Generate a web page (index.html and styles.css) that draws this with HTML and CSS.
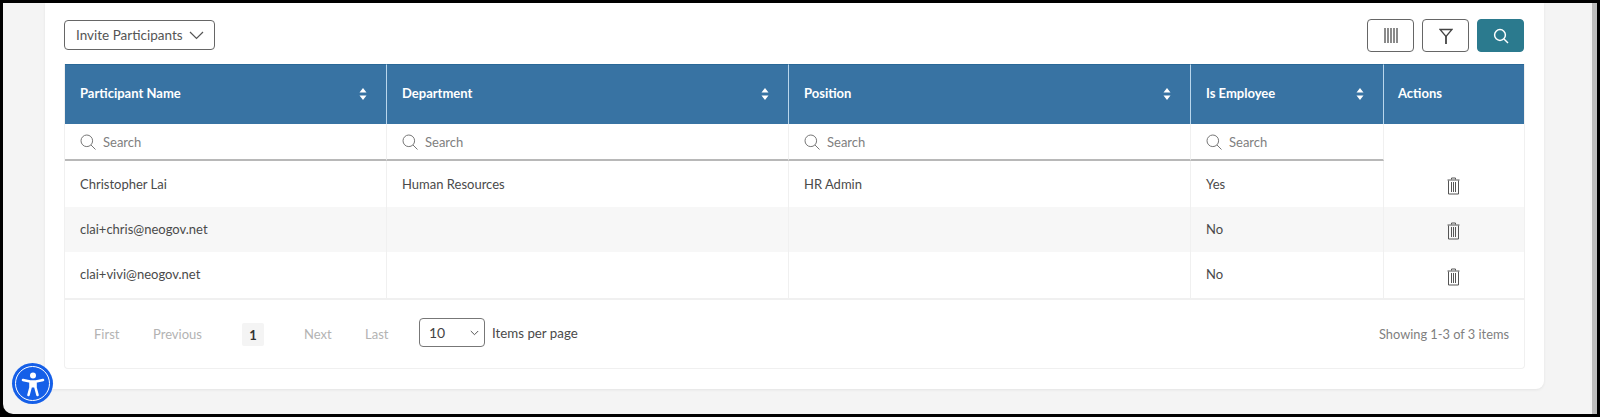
FILE: index.html
```html
<!DOCTYPE html>
<html lang="en">
<head>
<meta charset="utf-8">
<title>Participants</title>
<link rel="stylesheet" href="styles.css">
</head>
<body>
<div class="frame">
  <main class="page">
    <section class="card">
      <div class="toolbar">
        <button class="invite" type="button">Invite Participants
          <svg class="chev" width="15" height="9" viewBox="0 0 15 9"><path d="M1 1l6.500 6.500L14 1" fill="none" stroke="#555" stroke-width="1.200"/></svg>
        </button>
        <div class="tools">
          <button class="tool" type="button" aria-label="Columns">
            <svg width="14" height="15" viewBox="0 0 14 15"><path d="M1 0v15M4 0v15M7 0v15M10 0v15M13 0v15" stroke="#666" stroke-width="1.500"/></svg>
          </button>
          <button class="tool" type="button" aria-label="Filter">
            <svg width="14" height="16" viewBox="0 0 14 16"><path d="M1 1.500h12L7 8.500z" fill="none" stroke="#444" stroke-width="1.300"/><path d="M7 8v8" stroke="#444" stroke-width="1.800"/></svg>
          </button>
          <button class="tool tool-on" type="button" aria-label="Search">
            <svg width="16" height="16" viewBox="0 0 16 16"><circle cx="7" cy="7" r="5.400" fill="none" stroke="#fff" stroke-width="1.500"/><path d="M11 11l4 4" stroke="#fff" stroke-width="1.500"/></svg>
          </button>
        </div>
      </div>
      <div class="grid-wrap">
        <table class="grid">
          <colgroup>
            <col class="c1"><col class="c2"><col class="c3"><col class="c4"><col class="c5">
          </colgroup>
          <thead>
            <tr class="head">
              <th><div class="th-in">Participant Name<svg width="8" height="12" viewBox="0 0 8 12"><path d="M4 0l3.500 4.500h-7zM4 12L.5 7.500h7z" fill="#fff"/></svg></div></th>
              <th><div class="th-in">Department<svg width="8" height="12" viewBox="0 0 8 12"><path d="M4 0l3.500 4.500h-7zM4 12L.5 7.500h7z" fill="#fff"/></svg></div></th>
              <th><div class="th-in">Position<svg width="8" height="12" viewBox="0 0 8 12"><path d="M4 0l3.500 4.500h-7zM4 12L.5 7.500h7z" fill="#fff"/></svg></div></th>
              <th><div class="th-in">Is Employee<svg width="8" height="12" viewBox="0 0 8 12"><path d="M4 0l3.500 4.500h-7zM4 12L.5 7.500h7z" fill="#fff"/></svg></div></th>
              <th class="th-act">Actions</th>
            </tr>
            <tr class="filters">
              <td><div class="search"><svg width="16" height="16" viewBox="0 0 16 16"><circle cx="6.800" cy="6.800" r="5.800" fill="none" stroke="#777"/><path d="M11 11l4.500 4.500" stroke="#777"/></svg>Search</div></td>
              <td><div class="search"><svg width="16" height="16" viewBox="0 0 16 16"><circle cx="6.800" cy="6.800" r="5.800" fill="none" stroke="#777"/><path d="M11 11l4.500 4.500" stroke="#777"/></svg>Search</div></td>
              <td><div class="search"><svg width="16" height="16" viewBox="0 0 16 16"><circle cx="6.800" cy="6.800" r="5.800" fill="none" stroke="#777"/><path d="M11 11l4.500 4.500" stroke="#777"/></svg>Search</div></td>
              <td><div class="search"><svg width="16" height="16" viewBox="0 0 16 16"><circle cx="6.800" cy="6.800" r="5.800" fill="none" stroke="#777"/><path d="M11 11l4.500 4.500" stroke="#777"/></svg>Search</div></td>
              <td class="no-filter"></td>
            </tr>
          </thead>
          <tbody>
            <tr class="r1">
              <td>Christopher Lai</td><td>Human Resources</td><td>HR Admin</td><td>Yes</td>
              <td class="act"><svg class="trash" width="13" height="18" viewBox="0 0 13 18"><path d="M4.500 2.500V1h4v1.500M.5 3h12M1.500 3.500v13.500h10V3.500M4.500 5v10M6.500 5v10M8.500 5v10" fill="none" stroke="#555"/></svg></td>
            </tr>
            <tr class="r2">
              <td>clai+chris@neogov.net</td><td></td><td></td><td>No</td>
              <td class="act"><svg class="trash" width="13" height="18" viewBox="0 0 13 18"><path d="M4.500 2.500V1h4v1.500M.5 3h12M1.500 3.500v13.500h10V3.500M4.500 5v10M6.500 5v10M8.500 5v10" fill="none" stroke="#555"/></svg></td>
            </tr>
            <tr class="r3">
              <td>clai+vivi@neogov.net</td><td></td><td></td><td>No</td>
              <td class="act"><svg class="trash" width="13" height="18" viewBox="0 0 13 18"><path d="M4.500 2.500V1h4v1.500M.5 3h12M1.500 3.500v13.500h10V3.500M4.500 5v10M6.500 5v10M8.500 5v10" fill="none" stroke="#555"/></svg></td>
            </tr>
          </tbody>
        </table>
        <div class="pager">
          <span class="pg pg-first">First</span>
          <span class="pg pg-prev">Previous</span>
          <span class="pg-cur">1</span>
          <span class="pg pg-next">Next</span>
          <span class="pg pg-last">Last</span>
          <div class="size">10<svg width="9" height="6" viewBox="0 0 9 6"><path d="M.8 1l3.700 3.700L8.200 1" fill="none" stroke="#555"/></svg></div>
          <span class="per">Items per page</span>
          <span class="count">Showing 1-3 of 3 items</span>
        </div>
      </div>
    </section>
  </main>
  <div class="scroll"></div>
  <button class="a11y" type="button" aria-label="Accessibility">
    <svg width="26" height="26" viewBox="0 0 26 26"><circle cx="13" cy="4.500" r="3" fill="#fff"/><path d="M3 9l7 1.500h6L23 9M10.500 10.500v6l-2 7.500M15.500 10.500v6l2 7.500" fill="none" stroke="#fff" stroke-width="2.600" stroke-linecap="round" stroke-linejoin="round"/><path d="M10.500 10.500h5v6h-5z" fill="#fff"/></svg>
  </button>
</div>
</body>
</html>
```

FILE: styles.css
```css
* { box-sizing: border-box; }
html, body { margin: 0; height: 100%; background: #000; overflow: hidden; }
body { font-family: "Lato", "Liberation Sans", sans-serif; font-size: 13px; color: #4a4a4a; }
button { font-family: inherit; }

.frame {
  height: 417px;
  border: 3px solid #000;
  display: flex;
  background: #000;
}
.page {
  flex: 1;
  min-width: 0;
  background: #f4f4f4;
  padding-left: 42px;
  padding-right: 48px;
  border-bottom-left-radius: 10px;
}
.scroll { width: 5px; flex: none; background: #bdbdbd; }

.card {
  height: 386px;
  background: #fff;
  border-radius: 0 0 8px 8px;
  box-shadow: 0 1px 3px rgba(0,0,0,.07);
  padding: 16px 19px 20px 19px;
}

.toolbar {
  display: flex;
  justify-content: space-between;
  align-items: flex-start;
  height: 45px;
  padding-right: 1px;
}
.invite {
  margin-top: 1px;
  width: 151px;
  height: 30px;
  border: 1px solid #666;
  border-radius: 4px;
  background: #fff;
  color: #555;
  font-size: 13.500px;
  display: flex;
  align-items: center;
  gap: 6px;
  padding: 0 0 0 11px;
}
.tools { display: flex; gap: 8px; }
.tool {
  width: 47px;
  height: 33px;
  border: 1px solid #666;
  border-radius: 4px;
  background: #fff;
  display: flex;
  align-items: center;
  justify-content: center;
  padding: 0;
}
.tool-on { background: #2b7a8e; border-color: #2b7a8e; }

.grid-wrap {
  height: 305px;
  border: 1px solid #f0f0f0;
  border-top: 0;
  border-radius: 0 0 4px 4px;
}
.grid {
  table-layout: fixed;
  width: 1459px;
  border-collapse: separate;
  border-spacing: 0;
}
.c1 { width: 322px; }
.c2 { width: 402px; }
.c3 { width: 402px; }
.c4 { width: 193px; }
.c5 { width: 140px; }

.head th {
  height: 60px;
  background: #3873a3;
  border-top: 1px solid #2a6897;
  border-right: 1px solid #b9d6ec;
  color: #fff;
  font-size: 13px;
  font-weight: 700;
  text-align: left;
  padding: 0 15px 3px;
}
.head th:last-child { border-right: 0; }
.head .th-act { padding-left: 14px; }
.th-in { display: flex; justify-content: space-between; align-items: center; padding-right: 4px; }
.th-in svg { margin-top: 2px; }

.filters td {
  height: 37px;
  padding: 0 15px;
  border-bottom: 2px solid #b8b8b8;
  border-right: 1px solid #f0f0f0;
}
.filters .no-filter { border-bottom: 0; border-right: 0; }
.search { display: flex; align-items: center; gap: 7px; color: #808080; font-size: 13px; }

tbody td {
  padding: 0 15px;
  color: #4a4a4a;
  font-size: 13px;
  border-right: 1px solid #f0f0f0;
  vertical-align: middle;
}
tbody td:last-child { border-right: 0; }
.r1 td { height: 46px; }
.r2 td { height: 45px; background: #f7f7f7; padding-bottom: 2px; }
.r3 td { height: 46px; padding-bottom: 2px; }
td.act { text-align: center; padding: 3px 2px 0 0; }
.r2 td.act, .r3 td.act { padding: 3px 2px 0 0; }
.trash { display: inline-block; vertical-align: middle; }

.pager {
  border-top: 2px solid #f0f0f0;
  height: 71px;
  display: flex;
  align-items: center;
  padding: 0 15px 1px 29px;
  font-size: 13px;
}
.pg { color: #b3b3b3; }
.pg-first { width: 59px; }
.pg-prev { width: 89px; }
.pg-cur {
  width: 22px;
  height: 23px;
  margin-top: 1px;
  background: #f4f4f4;
  border-radius: 2px;
  color: #333;
  font-weight: 700;
  display: flex;
  align-items: center;
  justify-content: center;
  margin-right: 40px;
}
.pg-next { width: 61px; }
.pg-last { width: 54px; }
.size {
  width: 66px;
  height: 29px;
  margin-bottom: 3px;
  border: 1px solid #777;
  border-radius: 4px;
  display: flex;
  align-items: center;
  justify-content: space-between;
  padding: 0 5px 0 9px;
  color: #444;
  font-size: 14px;
}
.per { margin-left: 7px; color: #4a4a4a; margin-bottom: 2px; font-size: 13.300px; }
.count { margin-left: auto; color: #808080; font-size: 12.800px; }

.a11y {
  position: absolute;
  left: 12px;
  top: 363px;
  width: 41px;
  height: 41px;
  border-radius: 50%;
  background: #155fe8;
  border: 0;
  padding: 0;
  display: flex;
  align-items: center;
  justify-content: center;
}
.a11y::before {
  content: "";
  position: absolute;
  inset: 3px;
  border: 1.500px solid #fff;
  border-radius: 50%;
}
```
